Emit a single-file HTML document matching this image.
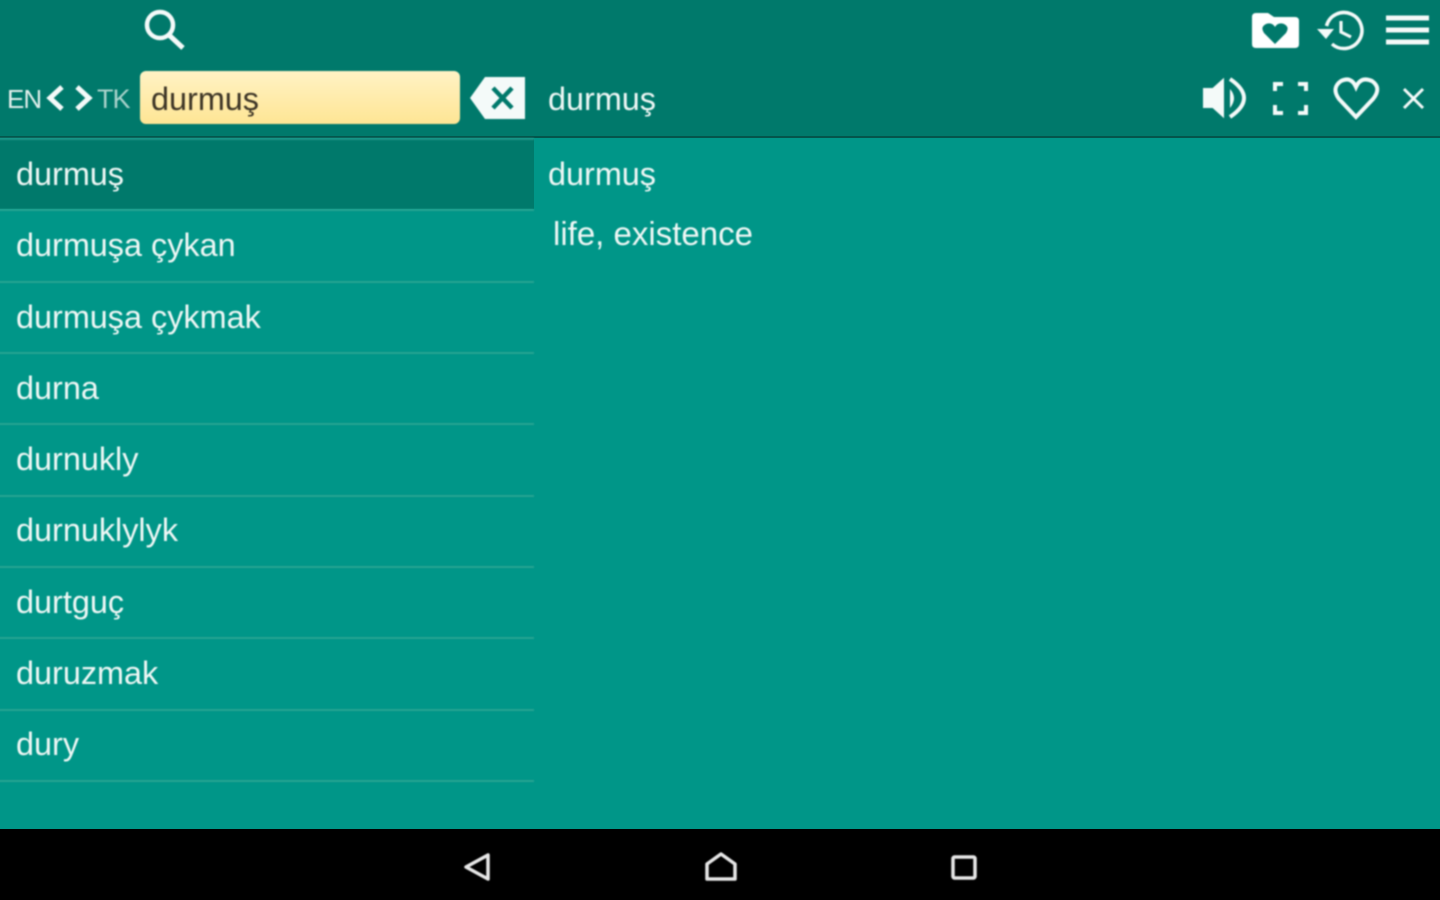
<!DOCTYPE html>
<html><head><meta charset="utf-8"><style>
html,body{margin:0;padding:0;background:#009688}
#w{position:relative;width:1440px;height:900px;overflow:hidden;background:#009688}
#w div{position:absolute}
#p{left:0;top:0;width:1440px;height:900px;font-family:"Liberation Sans",sans-serif;color:#eef7f5;filter:blur(.75px)}
.t{font-size:32.4px;line-height:40px;white-space:nowrap}
.s{left:-6px;width:540px;height:2px;background:#26a392}
svg{position:absolute;left:0;top:0}
</style></head><body><div id="w">
<div style="left:0;top:0;width:1440px;height:136px;background:#00796b"></div>
<div style="left:0;top:136px;width:1440px;height:2px;background:#04544b"></div>
<div style="left:0;top:139px;width:534px;height:70px;background:#00796b"></div>
<div style="left:0;top:829px;width:1440px;height:71px;background:#000"></div>
<div id="p">
<div class="s" style="top:138px;background:#1f9587"></div>
<div class="s" style="top:209px"></div><div class="s" style="top:281px"></div><div class="s" style="top:352px"></div><div class="s" style="top:423px"></div><div class="s" style="top:495px"></div><div class="s" style="top:566px"></div><div class="s" style="top:637px"></div><div class="s" style="top:709px"></div><div class="s" style="top:780px"></div>
<div style="left:140px;top:71px;width:320px;height:53px;border-radius:6px;background:linear-gradient(#fff2c4,#fee594)"></div>
<div style="left:7px;top:85px;font-size:26px;line-height:28px;letter-spacing:-1px;color:#e2efec">EN</div>
<div style="left:97px;top:85px;font-size:27px;line-height:28px;letter-spacing:-1px;color:#a9d2cb">TK</div>
<div class="t" style="left:151px;top:79px;color:#3d3526">durmuş</div>
<div class="t" style="left:548px;top:79px">durmuş</div>
<div class="t" style="left:16px;top:154px">durmuş</div>
<div class="t" style="left:16px;top:225px">durmuşa çykan</div>
<div class="t" style="left:16px;top:297px">durmuşa çykmak</div>
<div class="t" style="left:16px;top:368px">durna</div>
<div class="t" style="left:16px;top:439px">durnukly</div>
<div class="t" style="left:16px;top:510px">durnuklylyk</div>
<div class="t" style="left:16px;top:582px">durtguç</div>
<div class="t" style="left:16px;top:653px">duruzmak</div>
<div class="t" style="left:16px;top:724px">dury</div>
<div class="t" style="left:548px;top:154px">durmuş</div>
<div class="t" style="left:553px;top:214px;font-size:33px">life, existence</div>
<svg width="1440" height="900" viewBox="0 0 1440 900" fill="none" stroke="#f4faf9" stroke-width="4">
<circle cx="160" cy="25" r="13" stroke-width="4.5"/><path d="M169 35L183 48" stroke-width="5"/>
<path d="M62 87L50 98L62 109M77 87L89 98L77 109" stroke-width="5"/>
<path d="M470 98L485 77H525V119H485Z" fill="#f4faf9" stroke="none"/>
<path d="M493 88L512 108M512 88L493 108" stroke="#00796b" stroke-width="4.5"/>
<path d="M1252 17V44Q1252 48 1256 48H1295Q1299 48 1299 44V21Q1299 17 1295 17H1274L1268 13H1256Q1252 13 1252 17Z" fill="#fff" stroke="none"/>
<path d="M1275 44L1264 33Q1260 27 1266 24Q1272 22 1275 27Q1278 22 1284 24Q1290 27 1286 33Z" fill="#00796b" stroke="none"/>
<path d="M1326.500 26A18 18 0 1 1 1332 44" stroke-width="3.5"/>
<path d="M1317 29H1334L1326 39Z" fill="#f4faf9" stroke="none"/>
<path d="M1341 21V32L1351 37" stroke-width="3.2"/>
<path d="M1386 18H1429M1386 30H1429M1386 42H1429" stroke-width="5"/>
<path d="M1204 89H1213L1223 80V116L1213 107H1204Z" fill="#f4faf9" stroke="#f4faf9" stroke-width="2"/>
<path d="M1230 89Q1238 98 1230 108Z" fill="#f4faf9" stroke="none"/><path d="M1230 79Q1258 98 1230 117" stroke-width="4"/>
<path d="M1275 91V84H1283M1298 84H1306V91M1306 105V113H1298M1283 113H1275V105" stroke-width="4"/>
<path d="M1356 117L1339 99Q1331 88 1341 81Q1351 76 1356 87Q1361 76 1372 81Q1382 88 1373 99Z" stroke-width="4"/>
<path d="M1404 89L1423 108M1423 89L1404 108" stroke-width="3"/>
<g stroke="#e6e6e6" stroke-width="3.500" stroke-linejoin="round">
<path d="M466 867L488 855V879Z"/>
<path d="M707 879V864L721 854L735 864V879Z"/>
<rect x="953" y="857" width="22" height="21" rx="1.500"/>
</g>
</svg>
</div>
</div></body></html>
